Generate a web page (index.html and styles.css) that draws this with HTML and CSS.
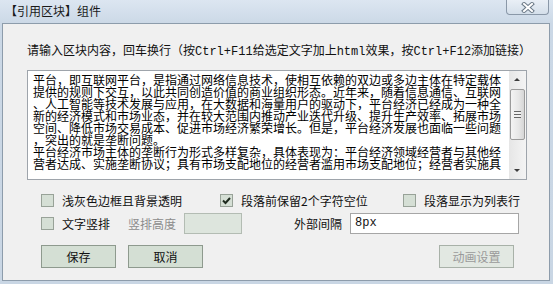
FILE: index.html
```html
<!DOCTYPE html>
<html lang="zh-CN">
<head>
  <meta charset="UTF-8" />
  <title>【引用区块】组件</title>
  <link rel="stylesheet" href="styles.css">
</head>
<body>
  <div class="window">
    <div class="titlebar">
      <span class="title">【引用区块】组件</span>
      <span class="close">
        <svg width="14" height="11" viewBox="0 0 14 11">
          <path d="M3 2 L11 9 M11 2 L3 9" stroke="#6c7a88" stroke-width="4" stroke-linecap="square" fill="none"/>
          <path d="M3 2 L11 9 M11 2 L3 9" stroke="#ffffff" stroke-width="2" stroke-linecap="square" fill="none"/>
        </svg>
      </span>
    </div>

    <div class="client">
      <p class="hint">请输入区块内容，回车换行（按<span class="mono">Ctrl+F11</span>给选定文字加上<span class="mono">html</span>效果，按<span class="mono">Ctrl+F12</span>添加链接）</p>

      <div class="editor">
        <div class="editor-text">平台，即互联网平台，是指通过网络信息技术，使相互依赖的双边或多边主体在特定载体提供的规则下交互，以此共同创造价值的商业组织形态。近年来，随着信息通信、互联网、人工智能等技术发展与应用，在大数据和海量用户的驱动下，平台经济已经成为一种全新的经济模式和市场业态，并在较大范围内推动产业迭代升级、提升生产效率、拓展市场空间、降低市场交易成本、促进市场经济繁荣增长。但是，平台经济发展也面临一些问题，突出的就是垄断问题。
平台经济市场主体的垄断行为形式多样复杂，具体表现为：平台经济领域经营者与其他经营者达成、实施垄断协议；具有市场支配地位的经营者滥用市场支配地位；经营者实施具</div>
        <div class="scrollbar">
          <span class="arrow arrow-up"></span>
          <span class="track"><span class="thumb"><span class="grip"></span></span></span>
          <span class="arrow arrow-down"></span>
        </div>
      </div>

      <div class="row row-checks">
        <label class="check w1"><span class="box"></span>浅灰色边框且背景透明</label>
        <label class="check w2"><span class="box">
          <svg width="11" height="11" viewBox="0 0 11 11"><path d="M2 5.5 L4.5 8 L9 3" stroke="#1e2a1e" stroke-width="2" fill="none"/></svg>
        </span>段落前保留2个字符空位</label>
        <label class="check"><span class="box"></span>段落显示为列表行</label>
      </div>

      <div class="row row-fields">
        <label class="check"><span class="box"></span>文字竖排</label>
        <span class="field-label muted">竖排高度</span>
        <span class="input input-disabled"></span>
        <span class="field-label gap-wide">外部间隔</span>
        <span class="input input-wide">8px</span>
      </div>

      <div class="row row-buttons">
        <button class="btn">保存</button>
        <button class="btn btn-next">取消</button>
        <button class="btn btn-disabled">动画设置</button>
      </div>
    </div>
  </div>
</body>
</html>
```

FILE: styles.css
```css
body {
  margin: 0;
  font-family: "Noto Sans CJK SC", "Liberation Sans", sans-serif;
  font-size: 12px;
  color: #111;
}
.window {
  width: 553px;
  height: 284px;
  background: linear-gradient(#dce6f1, #cbd8e6 24px, #c9d6e4);
  display: flex;
  flex-direction: column;
  overflow: hidden;
}
.titlebar {
  height: 23px;
  display: flex;
  justify-content: space-between;
  align-items: flex-start;
}
.title {
  margin: 4px 0 0 5px;
  line-height: 14px;
  color: #1a1a1a;
}
.close {
  width: 43px;
  height: 15px;
  margin-right: 4px;
  box-sizing: border-box;
  border: 1px solid #8a98a8;
  border-top: none;
  border-radius: 0 0 4px 4px;
  background: linear-gradient(#e9eff6, #d4dfea);
  display: flex;
  justify-content: center;
  align-items: center;
}
.client {
  margin: 0 3px 3px 2px;
  flex: 1;
  border: 1px solid #8d9cab;
  background: #f0f0f0;
}
.hint {
  margin: 20px 0 0 24px;
  line-height: 12px;
  white-space: nowrap;
}
.mono {
  font-family: "Liberation Mono", monospace;
  font-size: 12px;
}
.editor {
  margin: 12px 0 0 24px;
  width: 500px;
  height: 110px;
  box-sizing: border-box;
  border: 1px solid #9ea4ab;
  background: #fff;
  display: flex;
  overflow: hidden;
}
.editor-text {
  width: 470px;
  padding: 3px 0 0 5px;
  line-height: 12px;
  white-space: pre-wrap;
  line-break: anywhere;
  word-break: break-all;
  color: #000;
}
.scrollbar {
  margin-left: auto;
  width: 17px;
  display: flex;
  flex-direction: column;
  background: linear-gradient(90deg, #e6e6e6, #f4f4f4);
}
.arrow {
  height: 17px;
  position: relative;
}
.arrow::after {
  content: "";
  position: absolute;
  left: 5px;
  border-left: 3px solid transparent;
  border-right: 3px solid transparent;
}
.arrow-up::after {
  top: 7px;
  border-bottom: 3px solid #3c3c3c;
}
.arrow-down::after {
  top: 7px;
  border-top: 3px solid #3c3c3c;
}
.track {
  flex: 1;
  padding-top: 1px;
}
.thumb {
  display: flex;
  justify-content: center;
  align-items: center;
  margin: 0 1px;
  height: 51px;
  box-sizing: border-box;
  border: 1px solid #9b9b9b;
  border-radius: 2px;
  background: linear-gradient(90deg, #f4f4f4, #e6e6e6 60%, #d6d6d6);
}
.grip {
  width: 7px;
  height: 5px;
  border-top: 1px solid #666;
  border-bottom: 1px solid #666;
  background: linear-gradient(#f0f0f0 2px, #666 2px, #666 3px, #f0f0f0 3px);
}
.row {
  display: flex;
  align-items: center;
  margin-left: 38px;
  line-height: 12px;
}
.row-checks {
  margin-top: 14px;
  height: 13px;
}
.row-fields {
  margin-top: 6px;
  height: 21px;
}
.row-buttons {
  margin-top: 11px;
  height: 23px;
}
.check {
  display: flex;
  align-items: center;
  white-space: nowrap;
}
.w1 { width: 179px; }
.w2 { width: 183px; }
.box {
  width: 13px;
  height: 13px;
  box-sizing: border-box;
  border: 1px solid #98a298;
  background: #d5dfd5;
  margin-right: 8px;
  display: flex;
  justify-content: center;
  align-items: center;
}
.field-label {
  margin-left: 18px;
  white-space: nowrap;
}
.muted { color: #8c8c8c; }
.gap-wide { margin-left: 52px; }
.input {
  height: 21px;
  box-sizing: border-box;
  margin-left: 8px;
  border: 1px solid #b3bcb3;
  background: #dde5dd;
}
.input-disabled { width: 58px; }
.input-wide {
  width: 169px;
  border-color: #a6a6a6;
  background: #fff;
  padding-left: 4px;
  line-height: 19px;
  font-family: "Liberation Mono", monospace;
  font-size: 12px;
}
.btn {
  width: 75px;
  height: 23px;
  padding: 0;
  border: 1px solid #8e9a8e;
  background: #d4dfd4;
  font-family: inherit;
  font-size: 12px;
  color: #111;
}
.btn-next { margin-left: 12px; }
.btn-disabled {
  margin-left: 236px;
  border-color: #a8b1a8;
  background: #e2e8e2;
  color: #9a9a9a;
}
```
